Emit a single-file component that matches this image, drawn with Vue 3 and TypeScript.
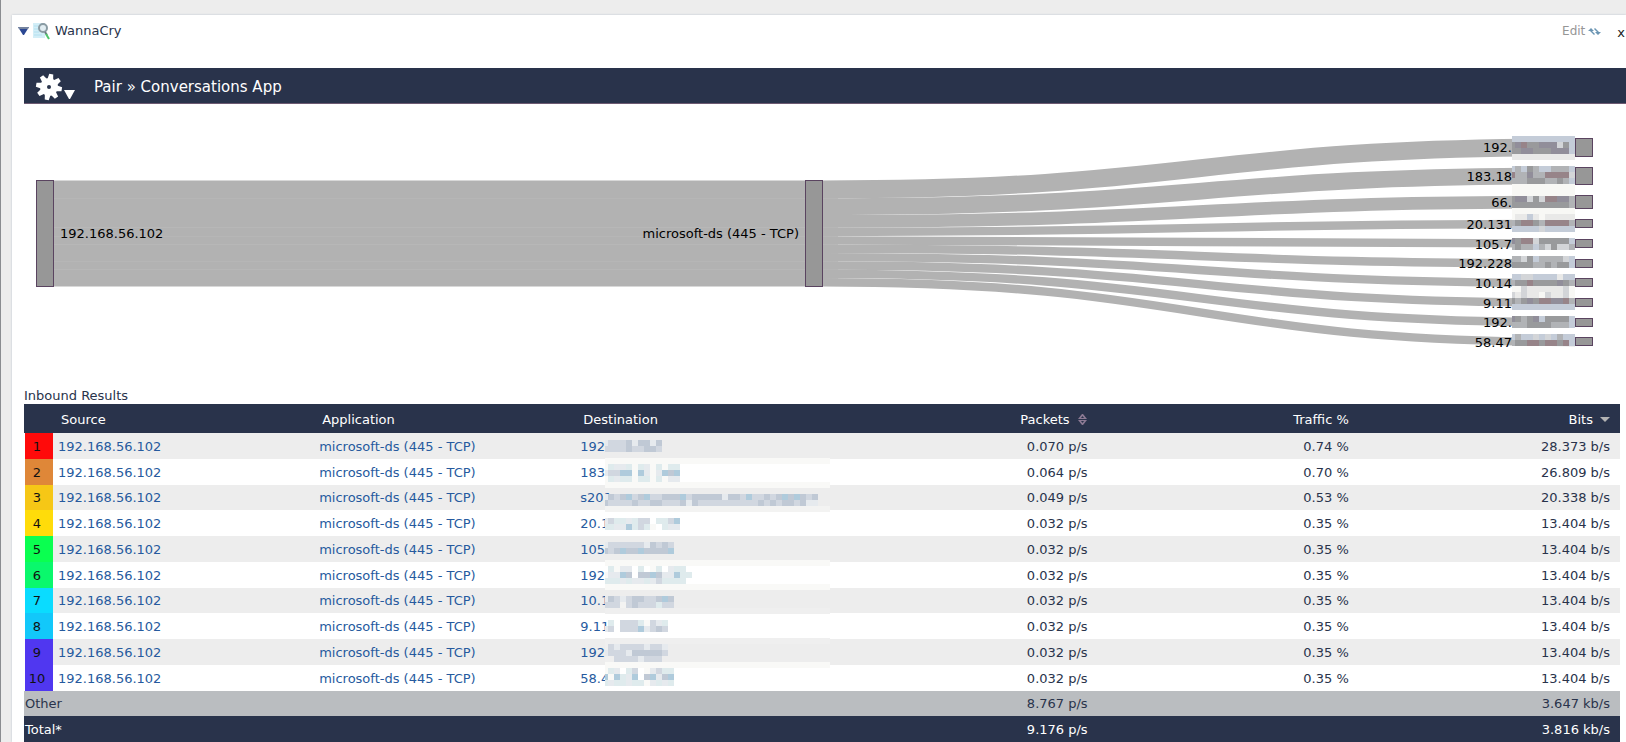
<script setup lang="ts">
import { computed, onBeforeUnmount, onMounted, ref } from 'vue'

interface Row {
  source: string
  app: string
  dest: string
  label: string
  packets: string
  traffic: string
  bits: number
  color: string
}

const rows: Row[] = [
  { dest: '192', label: '192.', packets: '0.070', traffic: '0.74', bits: 28.373, color: '#ff0a0a' },
  { dest: '183', label: '183.18', packets: '0.064', traffic: '0.70', bits: 26.809, color: '#df8738' },
  { dest: 's201', label: '66.', packets: '0.049', traffic: '0.53', bits: 20.338, color: '#f6c716' },
  { dest: '20.1', label: '20.131', packets: '0.032', traffic: '0.35', bits: 13.404, color: '#ffdc0a' },
  { dest: '105', label: '105.7', packets: '0.032', traffic: '0.35', bits: 13.404, color: '#0aff50' },
  { dest: '192', label: '192.228', packets: '0.032', traffic: '0.35', bits: 13.404, color: '#0af86c' },
  { dest: '10.1', label: '10.14', packets: '0.032', traffic: '0.35', bits: 13.404, color: '#0adcff' },
  { dest: '9.11', label: '9.11', packets: '0.032', traffic: '0.35', bits: 13.404, color: '#12c8fa' },
  { dest: '192', label: '192.', packets: '0.032', traffic: '0.35', bits: 13.404, color: '#5037f0' },
  { dest: '58.4', label: '58.47', packets: '0.032', traffic: '0.35', bits: 13.404, color: '#5037f0' },
].map((r) => ({ source: '192.168.56.102', app: 'microsoft-ds (445 - TCP)', ...r }))

// Flow diagram geometry
const chart = ref<HTMLElement | null>(null)
const width = ref(1602)
let observer: ResizeObserver | undefined
onMounted(() => {
  observer = new ResizeObserver(() => {
    if (chart.value) width.value = chart.value.clientWidth
  })
  if (chart.value) observer.observe(chart.value)
})
onBeforeUnmount(() => observer?.disconnect())

const nodeWidth = 17
const flowHeight = 106
const flowTop = 76
const gap = 11.3
const total = rows.reduce((sum, r) => sum + r.bits, 0)
const x0 = 12
const x2 = computed(() => width.value - 51)
const x1 = computed(() => Math.floor((x0 + x2.value) / 2))

const flows = computed(() => {
  let from = flowTop + 0.5
  let to = 34.5
  return rows.map((r) => {
    const h = (r.bits / total) * flowHeight
    const a = from + h / 2
    const b = to + h / 2
    const start = x1.value + nodeWidth
    const mid = (start + x2.value) / 2
    const flow = {
      label: r.label,
      h,
      top: to,
      center: b,
      inbound: `M${x0 + nodeWidth},${a}H${x1.value}`,
      outbound: `M${start},${a}C${mid},${a} ${mid},${b} ${x2.value},${b}`,
    }
    from += h
    to += h + gap
    return flow
  })
})

// Mosaic masks over the private part of each address
interface Cell { x: number; y: number; w: number; fill: string }
const CELL = 6
function mosaic(lines: string[], palette: Record<string, string>): Cell[] {
  const cells: Cell[] = []
  lines.forEach((line, row) => {
    const text = line.length === 1 && line !== '.' ? line.repeat(38) : line
    ;[...text].forEach((ch, col) => {
      if (!palette[ch]) return
      cells.push({ x: col === 0 ? 0 : col * CELL - 3, y: row * CELL, w: col === 0 ? 3 : CELL, fill: palette[ch] })
    })
  })
  return cells
}

const labelMask = mosaic(
  [
    'aaaaaaaaaaa', 'cedcceeelca', 'cceeccceeea', 'fffffffffff', '',
    'abacbaabbba', 'dbbebbddddl', 'bbbcccbbcba', 'ggggggggggg', 'ggggggggggg',
    'ceelclddeeb', 'ccccccccccb', 'ggggggggggg', 'gffafgfffff', 'bcddcbddddb',
    'aaaaalaaaaa', '', 'ecddlccccca', 'bcbbablcllb', '',
    'bblcabbbbla', 'ccccbbcbcca', '', 'aallaaaafaa', 'bccdccccecb',
    'gglfffffflg', 'lflffglfflg', 'cbcecddeedb', 'aaaaaaaaaaa', '',
    'ecbceacccca', 'bbbccccbbba', '', 'abaalalabaa', 'bccddcddcda',
  ],
  {
    a: '#c4ccd8', b: '#b1b3b6', c: '#999a9c', d: '#978489', e: '#918e9a',
    f: '#e9e9e8', g: '#f8f8f5', l: '#d3d5d8',
  },
)

const cellMask = mosaic(
  [
    'ebbbaeaaea', 'bbbbabbaab', '', 'f', 'fceecfcefcfcc', 'ebbddfdefedad', 'fceccfccfcfee',
    'f', '', 'eabadbadbbaaadbaaaaaeaabdbbabadadaba', 'abbbbabbaabbbaeabbbbbbbbbbababaabaee', 'g',
    '', 'ebccecbb.ccbd', 'cceedcbcf.cee', '', '', 'ebbbbbbeabab', 'abadaadaaaad', '',
    'f', '.cfee.c.fc.ecc', 'feeda.aadaeedcc', 'ccceceecebcccc', 'f', '', 'eabebaabbada', 'bbbgbabbbcbb',
    'h', '', '.c.bbbcfbec', 'eb.bbbdebab', '', 'h', 'hbebbbbebbe', 'ebbbeaaaaab', 'hhbbbbebbb',
    'f', 'fce.cb.febcc', 'dfdced.adead', 'cecceccfecec',
  ],
  {
    a: '#c0c9d5', b: '#d1d7e0', c: '#dfebed', d: '#afcbdc', e: '#e6eaee',
    f: '#f9f9f7', g: '#f3f3f2', h: '#efefef',
  },
)

const teeth = [0, 45, 90, 135, 180, 225, 270, 315]
</script>

<template>
  <div class="page">
    <main class="panel">
      <header class="title">
        <button class="toggle" aria-label="Collapse">
          <svg width="11" height="8" viewBox="0 0 11 8"><path d="M0 0H11L6 8H5Z" fill="#2b4793" /><path d="M0 0H11L10 2H1Z" fill="#74839f" /></svg>
        </button>
        <svg class="lens" width="17" height="17" viewBox="0 0 17 17">
          <rect width="12" height="15" fill="#d3eef7" />
          <path d="M1 3h4M1 6h4M1 9h5M1 12h8" stroke="#b3e0f0" />
          <circle cx="10" cy="5" r="4" fill="#e1edf2" stroke="#8a9ba3" stroke-width="2" />
          <path d="M12 9l2 3" stroke="#6c7a80" stroke-width="2" />
          <path d="M13 11l3 5" stroke="#4fc56b" stroke-width="2" />
        </svg>
        <h1>WannaCry</h1>
        <button class="edit">
          Edit
          <svg width="13" height="9" viewBox="0 0 13 9" fill="#6b95b3">
            <path d="M0 4L3 1L6 4H4L7 7L6 8L2 4Z" /><path d="M13 5L10 8L7 5H9L6 2L7 1L11 5Z" />
          </svg>
        </button>
        <button class="close" aria-label="Close">x</button>
      </header>

      <div class="bar">
        <button class="gear" aria-label="Report options">
          <svg width="42" height="28" viewBox="0 0 42 28" fill="#fff">
            <path
              v-for="t in teeth" :key="t" d="M-3 -7L-2 -13H2L3 -7Z"
              :transform="`translate(14 14) rotate(${t + 10})`"
            />
            <circle cx="14" cy="14" r="9" />
            <circle cx="14" cy="14" r="2" fill="#29334b" />
            <path d="M29 17H40L35 26H34Z" />
          </svg>
        </button>
        <h2>Pair » Conversations App</h2>
      </div>

      <div ref="chart" class="chart">
        <svg :width="width" height="284" role="img" aria-label="Conversation flows">
          <rect :x="x0 + nodeWidth" :y="flowTop + 1" :width="x1 - x0 + 16" :height="flowHeight - 1" fill="#b2b2b2" opacity="0.7" />
          <g fill="none" stroke="#b2b2b2">
            <template v-for="(f, i) in flows" :key="i">
              <path :d="f.inbound" :stroke-width="f.h" />
              <path :d="f.outbound" :stroke-width="f.h" />
            </template>
          </g>
          <g class="nodes">
            <rect :x="x0 + 0.5" :y="flowTop + 0.5" :width="nodeWidth" :height="flowHeight" />
            <rect :x="x1 + 0.5" :y="flowTop + 0.5" :width="nodeWidth" :height="flowHeight" />
            <rect
              v-for="(f, i) in flows" :key="i" :x="x2 + 0.5" :y="Math.floor(f.top) + 0.5"
              :width="nodeWidth" :height="Math.round(f.h)"
            />
          </g>
          <g class="labels">
            <text :x="x0 + 24" :y="flowTop + 58">192.168.56.102</text>
            <text :x="x1 - 6" :y="flowTop + 58" text-anchor="end">microsoft-ds (445 - TCP)</text>
            <text v-for="(f, i) in flows" :key="i" :x="x2 - 63" :y="Math.round(f.center) + 5" text-anchor="end">{{ f.label }}</text>
          </g>
          <g :transform="`translate(${x2 - 63} 32)`" shape-rendering="crispEdges">
            <rect v-for="(c, i) in labelMask" :key="i" :x="c.x" :y="c.y" :width="c.w" height="6" :fill="c.fill" />
          </g>
        </svg>
      </div>

      <h3>Inbound Results</h3>
      <div class="results">
        <table>
          <colgroup><col class="rank-col" /><col v-for="n in 6" :key="n" /></colgroup>
          <thead>
            <tr>
              <th aria-label="Rank"></th>
              <th>Source</th>
              <th>Application</th>
              <th>Destination</th>
              <th class="num">
                <button class="sort">
                  Packets
                  <svg width="11" height="11" viewBox="0 0 11 11" fill="#8c7a94"><path d="M1 5L5 0H6L10 5Z" /><path d="M1 6H10L6 11H5Z" /><path d="M4 4L5.500 2L7 4ZM4 7H7L5.500 9Z" fill="#29334b" /></svg>
                </button>
              </th>
              <th class="num">Traffic %</th>
              <th class="num">
                <button class="sort">
                  Bits
                  <svg width="10" height="11" viewBox="0 0 10 11"><path d="M0 3H10L5 8Z" fill="#b3b3b3" /></svg>
                </button>
              </th>
            </tr>
          </thead>
          <tbody>
            <tr v-for="(r, i) in rows" :key="i" class="item">
              <td class="rank" :style="{ backgroundColor: r.color }">{{ i + 1 }}</td>
              <td><a href="#">{{ r.source }}</a></td>
              <td><a href="#">{{ r.app }}</a></td>
              <td><a href="#">{{ r.dest }}</a></td>
              <td class="num">{{ r.packets }} p/s</td>
              <td class="num">{{ r.traffic }} %</td>
              <td class="num">{{ r.bits.toFixed(3) }} b/s</td>
            </tr>
            <tr class="other">
              <td class="sum" colspan="4">Other</td>
              <td class="num">8.767 p/s</td>
              <td></td>
              <td class="num">3.647 kb/s</td>
            </tr>
            <tr class="total">
              <td class="sum" colspan="4">Total*</td>
              <td class="num">9.176 p/s</td>
              <td></td>
              <td class="num">3.816 kb/s</td>
            </tr>
          </tbody>
        </table>
        <svg class="mask" width="227" height="246" shape-rendering="crispEdges" aria-hidden="true">
          <rect v-for="(c, i) in cellMask" :key="i" :x="c.x" :y="c.y" :width="c.w" height="6" :fill="c.fill" />
        </svg>
      </div>
    </main>
  </div>
</template>

<style>
body {
  margin: 0;
  background: #ededed;
}
</style>

<style scoped>
.page {
  box-sizing: border-box;
  height: 100vh;
  display: flex;
  padding: 15px 0 0 11px;
  border-left: 1px solid #8b8d91;
  overflow: hidden;
  font: 13px/16px Verdana, "DejaVu Sans", sans-serif;
  color: #29334b;
}
.panel {
  flex: 1;
  min-width: 0;
  display: flex;
  flex-direction: column;
  padding-left: 12px;
  background: #fff;
  box-shadow: 0 0 2px #b9c2cd;
}
h1, h2, h3 {
  margin: 0;
  font-size: 13px;
  font-weight: 400;
}
button {
  padding: 0;
  border: 0;
  background: none;
  font: inherit;
  color: inherit;
  cursor: pointer;
}
svg {
  display: block;
}
.title {
  display: flex;
  align-items: center;
  height: 32px;
  margin: 0 0 21px -6px;
}
.title h1 {
  flex: 1;
  margin-left: 5px;
}
.lens {
  margin-left: 4px;
}
.edit {
  display: flex;
  align-items: center;
  gap: 3px;
  font-size: 12px;
  color: #969696;
}
.close {
  margin: 4px 1px 0 16px;
  color: #222;
}
.bar {
  box-sizing: border-box;
  display: flex;
  align-items: center;
  gap: 17px;
  height: 36px;
  padding: 2px 0 0 11px;
  background: #29334b;
  border-bottom: 1px solid #6d5a72;
}
.bar h2 {
  font-size: 15px;
  line-height: 20px;
  color: #fff;
}
.chart {
  height: 284px;
  overflow: hidden;
}
.nodes rect {
  fill: #979797;
  stroke: #5a4460;
}
.labels {
  fill: #000;
}
.results {
  flex: 1;
  position: relative;
  margin-right: 6px;
}
table {
  width: 100%;
  height: 100%;
  table-layout: fixed;
  border-spacing: 0;
}
.rank-col {
  width: 29px;
}
th, td {
  padding: 2px 5px 0;
  text-align: left;
  font-weight: 400;
  white-space: nowrap;
}
thead tr {
  height: 29px;
  background: #29334b;
  color: #fff;
}
th {
  padding: 2px 8px 0;
}
.num {
  padding-right: 10px;
  text-align: right;
}
.sort {
  display: inline-flex;
  align-items: center;
  gap: 7px;
}
.item:nth-child(odd) {
  background: #ededed;
}
.rank {
  padding: 2px 4px 0 0;
  border-left: 1px solid #fff;
  text-align: center;
  color: #111;
}
a {
  color: #265a9e;
  text-decoration: none;
}
.other {
  background: #babdc0;
}
.total {
  background: #29334b;
  color: #fff;
}
.sum {
  padding: 2px 1px 0;
}
.mask {
  position: absolute;
  left: 581px;
  top: 36px;
}
</style>
